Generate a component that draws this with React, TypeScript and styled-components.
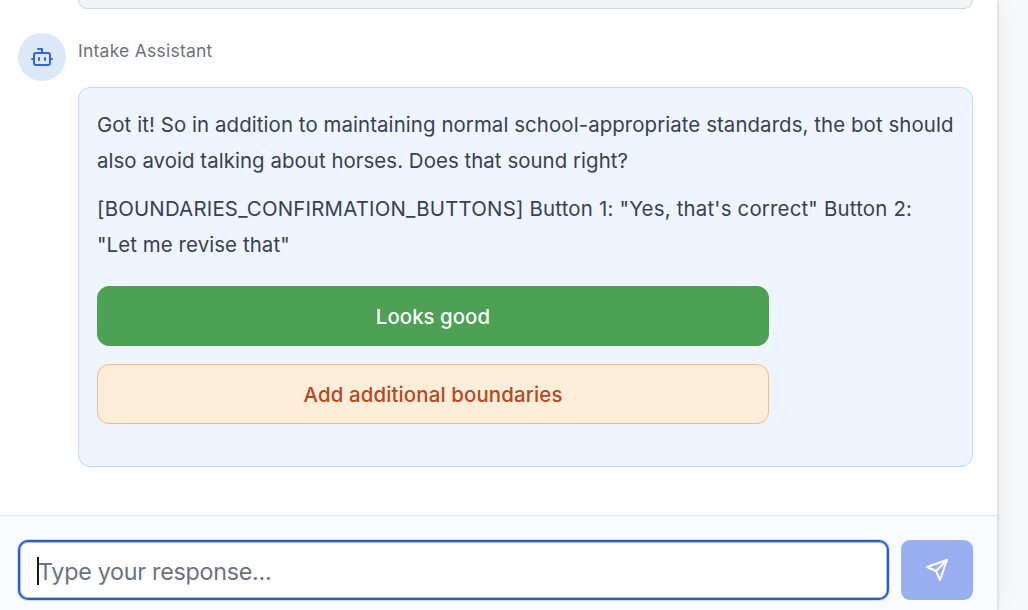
import React from "react";
import styled, { createGlobalStyle } from "styled-components";

const GlobalStyle = createGlobalStyle`
  *, *::before, *::after { box-sizing: border-box; }
  body {
    margin: 0;
    overflow: hidden;
    background: #f8f9fb;
    font-family: Inter, "Liberation Sans", sans-serif;
  }
`;

const Page = styled.div`
  height: 610px;
  overflow: hidden;
  background: #f8f9fb;
`;

const Panel = styled.main`
  display: flex;
  flex-direction: column;
  width: 998px;
  height: 610px;
  background: #fff;
  border-right: 1px solid #dfe1e6;
  box-shadow: 0 0 3px rgba(0, 0, 0, 0.14), 3px 0 22px rgba(0, 0, 0, 0.05);
`;

const Messages = styled.section`
  flex: none;
  height: 515px;
  padding: 0 24px 0 18px;
`;

const PreviousBubble = styled.div`
  height: 9px;
  margin-left: 60px;
  background: #f3f4f6;
  border: 1px solid #d1d5db;
  border-top: 0;
  border-radius: 0 0 12px 12px;
`;

const Message = styled.article`
  display: flex;
  gap: 12px;
  margin-top: 24px;
`;

const Avatar = styled.div`
  display: flex;
  flex: none;
  align-items: center;
  justify-content: center;
  width: 48px;
  height: 48px;
  border-radius: 50%;
  background: #dde8fb;
  color: #3662e3;
`;

const Content = styled.div`
  flex: 1;
  min-width: 0;
`;

const Sender = styled.div`
  height: 54px;
  padding-top: 4px;
  font-size: 17.5px;
  letter-spacing: 0.24px;
  line-height: 27px;
  color: #6b7280;
`;

const Bubble = styled.div`
  height: 380px;
  padding: 19px 18px;
  background: #eef5fe;
  border: 1px solid #bfdbfe;
  border-radius: 12px;
`;

const Paragraph = styled.p`
  margin: 0 0 12px;
  font-size: 20.4px;
  line-height: 36px;
  color: #374151;
`;

const Line = styled.span<{ $tracking: number }>`
  display: block;
  white-space: nowrap;
  letter-spacing: ${({ $tracking }) => $tracking}px;
`;

const Actions = styled.div`
  display: flex;
  flex-direction: column;
  gap: 18px;
  width: 672px;
  margin-top: 23px;
`;

const Choice = styled.button<{ $tone: "confirm" | "revise" }>`
  height: 60px;
  padding: 1px 0 0;
  border: 1px solid ${({ $tone }) => ($tone === "confirm" ? "#4da054" : "#f4bc7e")};
  border-radius: 12px;
  background: ${({ $tone }) => ($tone === "confirm" ? "#4da054" : "#fdedd9")};
  color: ${({ $tone }) => ($tone === "confirm" ? "#fff" : "#b5481f")};
  font: 500 20.4px/30px Inter, "Liberation Sans", sans-serif;
  letter-spacing: ${({ $tone }) => ($tone === "confirm" ? 0.04 : 0.14)}px;
`;

const Composer = styled.footer`
  display: flex;
  flex: 1;
  gap: 12px;
  padding: 24px 24px 0 18px;
  background: #f9fafb;
  border-top: 1px solid #e2e5e9;
`;

const Field = styled.div`
  display: flex;
  flex: 1;
  align-items: center;
  height: 60px;
  padding: 2px 0 0 17px;
  border: 2px solid #285dcb;
  border-radius: 10px;
  background: #fff;
  box-shadow: inset 0 0 0 1px #a9c0ec, 0 0 0 1px rgba(40, 93, 203, 0.2);
`;

const Caret = styled.span`
  width: 2px;
  height: 28px;
  margin-right: -1px;
  background: #111827;
`;

const Placeholder = styled.span`
  padding-top: 2px;
  font-size: 23.3px;
  letter-spacing: -0.27px;
  line-height: 36px;
  color: #6b7280;
`;

const SendButton = styled.button`
  display: flex;
  align-items: center;
  justify-content: center;
  width: 72px;
  height: 60px;
  padding: 0;
  border: 0;
  border-radius: 9px;
  background: #9aaff0;
  color: #fff;
`;

const Icon = styled.svg`
  width: 24px;
  height: 24px;
  fill: none;
  stroke: currentColor;
  stroke-width: 2;
  stroke-linecap: round;
  stroke-linejoin: round;
`;

export default function App() {
  return (
    <Page>
      <GlobalStyle />
      <Panel>
        <Messages>
          <PreviousBubble />
          <Message>
            <Avatar>
              <Icon viewBox="0 0 24 24">
                <path d="M12 8V4H8" />
                <rect width="16" height="12" x="4" y="8" rx="2" />
                <path d="M2 14h2M20 14h2M15 13v2M9 13v2" />
              </Icon>
            </Avatar>
            <Content>
              <Sender>Intake Assistant</Sender>
              <Bubble>
                <Paragraph>
                  <Line $tracking={0.09}>
                    Got it! So in addition to maintaining normal school-appropriate standards, the bot should
                  </Line>
                  <Line $tracking={0.06}>also avoid talking about horses. Does that sound right?</Line>
                </Paragraph>
                <Paragraph>
                  <Line $tracking={0.2}>
                    [BOUNDARIES_CONFIRMATION_BUTTONS] Button 1: "Yes, that's correct" Button 2:
                  </Line>
                  <Line $tracking={0.1}>"Let me revise that"</Line>
                </Paragraph>
                <Actions>
                  <Choice $tone="confirm">Looks good</Choice>
                  <Choice $tone="revise">Add additional boundaries</Choice>
                </Actions>
              </Bubble>
            </Content>
          </Message>
        </Messages>
        <Composer>
          <Field>
            <Caret />
            <Placeholder>Type your response...</Placeholder>
          </Field>
          <SendButton aria-label="Send">
            <Icon viewBox="0 0 24 24">
              <path d="m22 2-7 20-4-9-9-4Z" />
              <path d="M22 2 11 13" />
            </Icon>
          </SendButton>
        </Composer>
      </Panel>
    </Page>
  );
}
